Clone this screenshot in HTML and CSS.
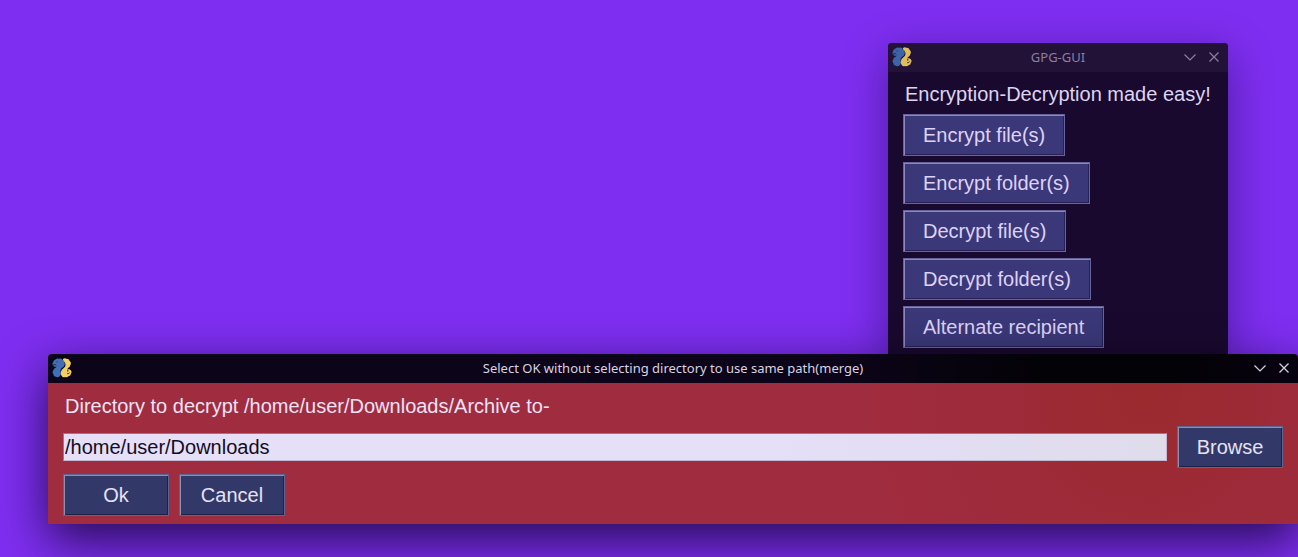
FILE: index.html
```html
<!DOCTYPE html>
<html lang="en">
<head>
<meta charset="utf-8">
<title>GPG-GUI</title>
<link rel="stylesheet" href="styles.css">
</head>
<body class="desktop">
<svg class="defs" aria-hidden="true">
  <symbol id="snakes" viewBox="0 0 20 20">
    <path fill="#3f6fb4" d="M3.500 1.500Q5-.3 7 .8Q9.800-.2 10.800 2.200Q13.400 4 12.700 6.500Q12.400 8.500 9.800 10Q8 11.500 8.600 14Q9.200 16 8 18Q6 20.200 4 18.800Q1.300 18.600 1.500 16.500Q-.3 14.500 1.200 12.500Q1.500 10.500 4 9.500L4.500 8.600Q2.500 9.600 1.200 7.800Q-.3 5.500 1.200 4Q1.300 2 3.500 1.500Z"/>
    <path fill="#f4cf63" d="M10.800 1.200Q12.500-.3 14.300.8Q17 .5 17.500 2.800Q19.700 4.500 18.500 6.800Q18.200 9 15.800 10.300L15.400 11.500Q17.300 10.600 18.800 12.200Q20.300 14 18.900 15.800Q18.700 18 16.500 18.300Q15 20 13 18.900Q10.300 19.800 9.400 17.500Q8.200 16 9.100 13.500Q9.200 11.600 11.500 10.300Q14 8.800 13.400 6Q13.400 4 11.500 3Z"/>
    <path fill="none" stroke="#182238" stroke-width=".8" d="M1 7Q3 5.800 4.300 7.200M4.500 4h1M15 12Q17 12.500 15.600 13.800M17.800 14.400Q17 16.200 15 15.600"/>
  </symbol>
  <symbol id="chevron" viewBox="0 0 12 12">
    <path fill="none" stroke="currentColor" stroke-width="1.200" d="M.5 3.500 6 9l5.500-5.500"/>
  </symbol>
  <symbol id="cross" viewBox="0 0 12 12">
    <path fill="none" stroke="currentColor" stroke-width="1.200" d="M1.500 1.500l9 9M10.500 1.500l-9 9"/>
  </symbol>
</svg>

<main class="window window-main">
  <header class="titlebar">
    <svg class="app-icon" aria-hidden="true"><use href="#snakes"/></svg>
    <h1 class="title">GPG-GUI</h1>
    <div class="controls">
      <button class="control" aria-label="Minimize"><svg class="glyph"><use href="#chevron"/></svg></button>
      <button class="control" aria-label="Close"><svg class="glyph"><use href="#cross"/></svg></button>
    </div>
  </header>
  <div class="content">
    <p class="caption">Encryption-Decryption made easy!</p>
    <div class="menu">
      <button class="button">Encrypt file(s)</button>
      <button class="button">Encrypt folder(s)</button>
      <button class="button">Decrypt file(s)</button>
      <button class="button">Decrypt folder(s)</button>
      <button class="button">Alternate recipient</button>
    </div>
  </div>
</main>

<section class="window window-dialog" role="dialog" aria-labelledby="dialog-title">
  <header class="titlebar">
    <svg class="app-icon" aria-hidden="true"><use href="#snakes"/></svg>
    <h2 class="title" id="dialog-title">Select OK without selecting directory to use same path(merge)</h2>
    <div class="controls">
      <button class="control" aria-label="Minimize"><svg class="glyph"><use href="#chevron"/></svg></button>
      <button class="control" aria-label="Close"><svg class="glyph"><use href="#cross"/></svg></button>
    </div>
  </header>
  <form class="content">
    <label class="caption" for="path">Directory to decrypt /home/user/Downloads/Archive to-</label>
    <div class="row">
      <input class="path" id="path" type="text" value="/home/user/Downloads">
      <button class="button" type="button">Browse</button>
    </div>
    <div class="row">
      <button class="button" type="button">Ok</button>
      <button class="button" type="button">Cancel</button>
    </div>
  </form>
</section>
</body>
</html>
```
FILE: styles.css
```css
* {
  box-sizing: border-box;
}

.desktop {
  margin: 0;
  min-height: 100vh;
  overflow: hidden;
  background: #7e2ef0;
  font-family: "Liberation Sans", Arial, sans-serif;
  font-size: 20px;
  line-height: 24px;
}

.defs {
  position: absolute;
  width: 0;
  height: 0;
}

.window {
  position: absolute;
  border-radius: 4px 4px 0 0;
}

.window-main {
  top: 43px;
  right: 70px;
  width: 340px;
  background: #19092e;
  color: #ded4f2;
  box-shadow: 0 12px 44px rgba(10, 0, 40, 0.4);
}

.window-dialog {
  top: 354px;
  left: 48px;
  right: 0;
  background: radial-gradient(circle at 1100px 40px, #9a2a2e 0, #9e2b3a 160px, #a02c40 340px);
  color: #efe2f6;
  box-shadow: 0 16px 48px rgba(10, 0, 30, 0.75);
}

.titlebar {
  display: grid;
  grid-template-columns: 1fr auto 1fr;
  align-items: center;
  height: 29px;
  padding: 0 4px 2px;
  border-radius: 4px 4px 0 0;
}

.window-main .titlebar {
  background: #231238;
  color: #8c7f9f;
}

.window-dialog .titlebar {
  background: linear-gradient(90deg, #0c0418 64%, #030206 80%, #030206 90%, #080210);
  color: #d9d3e2;
}

.app-icon {
  width: 20px;
  height: 20px;
}

.window-main .app-icon {
  opacity: 0.9;
}

.title {
  margin: 0;
  font: 13px/20px "Noto Sans", sans-serif;
}

.controls {
  display: flex;
  justify-content: flex-end;
  gap: 12px;
  padding-right: 4px;
}

.control {
  display: flex;
  padding: 0;
  border: 0;
  background: none;
  color: inherit;
}

.glyph {
  width: 12px;
  height: 12px;
}

.content {
  display: flex;
  flex-direction: column;
  gap: 6px;
  padding: 10px 15px 8px;
}

.caption {
  margin: 0;
  padding: 0 2px 2px;
  white-space: nowrap;
}

.window-dialog .caption {
  padding-top: 1px;
}

.menu {
  display: flex;
  flex-direction: column;
  align-items: flex-start;
  gap: 6px;
}

.row {
  display: flex;
  align-items: center;
  gap: 10px;
}

.button {
  min-width: 106px;
  height: 42px;
  padding: 0 19px;
  border: 1px solid #67649c;
  background: #3b3879;
  box-shadow: inset 1px 1px #8f86be, inset -1px -1px #25215a;
  color: #ded2f6;
  font: inherit;
}

.window-dialog .button {
  padding: 0 16px;
  border-color: #5d6590;
  background: #323968;
  box-shadow: inset 1px 1px #8890b4, inset -1px -1px #1c2146;
  color: #e6e2f6;
}

.path {
  flex: 1;
  min-width: 0;
  height: 28px;
  padding: 0 1px;
  border: 1px solid;
  border-color: #8f7a9c #c4b8d0 #c4b8d0 #8f7a9c;
  background: linear-gradient(90deg, #e5dff7 65%, #dfdcec);
  color: #140c24;
  font: inherit;
}
```
